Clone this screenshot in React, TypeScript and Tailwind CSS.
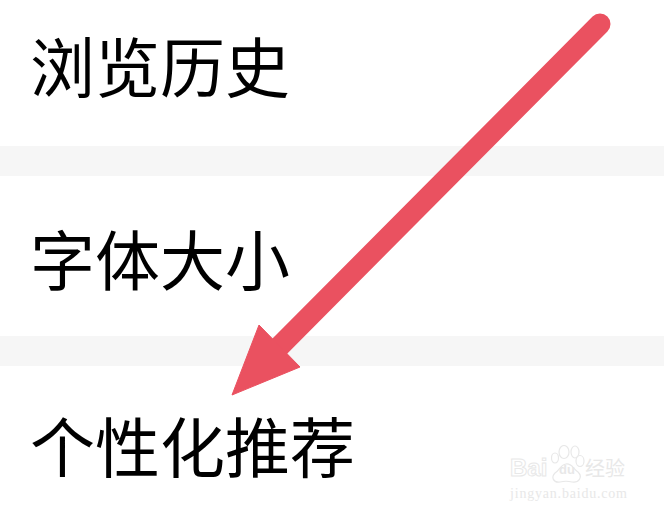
import React from 'react';

const font = "font-['Roboto','Noto_Sans_CJK_SC',sans-serif]";

const Row: React.FC<{ label: string; className: string }> = ({ label, className }) => (
  <div className={`pl-[30px] text-[65px] leading-[65px] font-normal text-black ${className}`}>{label}</div>
);

const Band: React.FC = () => <div className="h-[30px] bg-[#f6f6f6]" />;

const Arrow: React.FC = () => (
  <svg className="absolute left-0 top-0" width="664" height="516" viewBox="0 0 664 516" fill="none">
    <path d="M600 24 L270 356" stroke="#ea5160" strokeWidth="21" strokeLinecap="round" />
    <path d="M232 395 L259 325 L300 367 Z" fill="#ea5160" stroke="#ea5160" strokeWidth="1" strokeLinejoin="round" />
  </svg>
);

const Watermark: React.FC = () => (
  <div className="absolute left-[510px] top-[445px] w-[120px] text-[#e8e8e8]">
    <svg className="absolute left-[38px] top-0" width="40" height="40" viewBox="0 0 40 40" fill="none" stroke="#e8e8e8" strokeWidth="1.2">
      <ellipse cx="7" cy="13" rx="3.5" ry="5" />
      <ellipse cx="16" cy="7" rx="5" ry="6.5" />
      <ellipse cx="27" cy="7" rx="4" ry="6" />
      <ellipse cx="32" cy="16" rx="4" ry="5.5" />
      <path d="M18 19 C24 18 25 24 30 27 C35 32 31 38 24 37 C20 36 16 36 12 37 C5 38 3 32 7 28 C12 25 12 20 18 19 Z" />
    </svg>
    <div className="flex h-[36px] items-end pb-[1px] leading-[24px]">
      <span className="w-[49px] text-[24px] font-bold text-transparent [-webkit-text-stroke:1px_#e8e8e8] font-['Liberation_Sans',sans-serif]">Bai</span>
      <span className="w-[26px] text-[13px] leading-[20px] font-bold font-['Liberation_Sans',sans-serif]">du</span>
      <span className="text-[20px] font-['Noto_Sans_CJK_SC',sans-serif]">经验</span>
    </div>
    <div className="mt-[6px] text-[14px] leading-[14px] tracking-[0.8px] font-['Liberation_Serif',serif] whitespace-nowrap">jingyan.baidu.com</div>
  </div>
);

const App: React.FC = () => {
  return (
    <div className={`relative h-[516px] w-[664px] overflow-hidden bg-white ${font}`}>
      <Row label="浏览历史" className="h-[146px] pt-[38px]" />
      <Band />
      <Row label="字体大小" className="h-[160px] pt-[55px]" />
      <Band />
      <Row label="个性化推荐" className="h-[150px] pt-[52px]" />
      <Arrow />
      <Watermark />
    </div>
  );
};

export default App;
